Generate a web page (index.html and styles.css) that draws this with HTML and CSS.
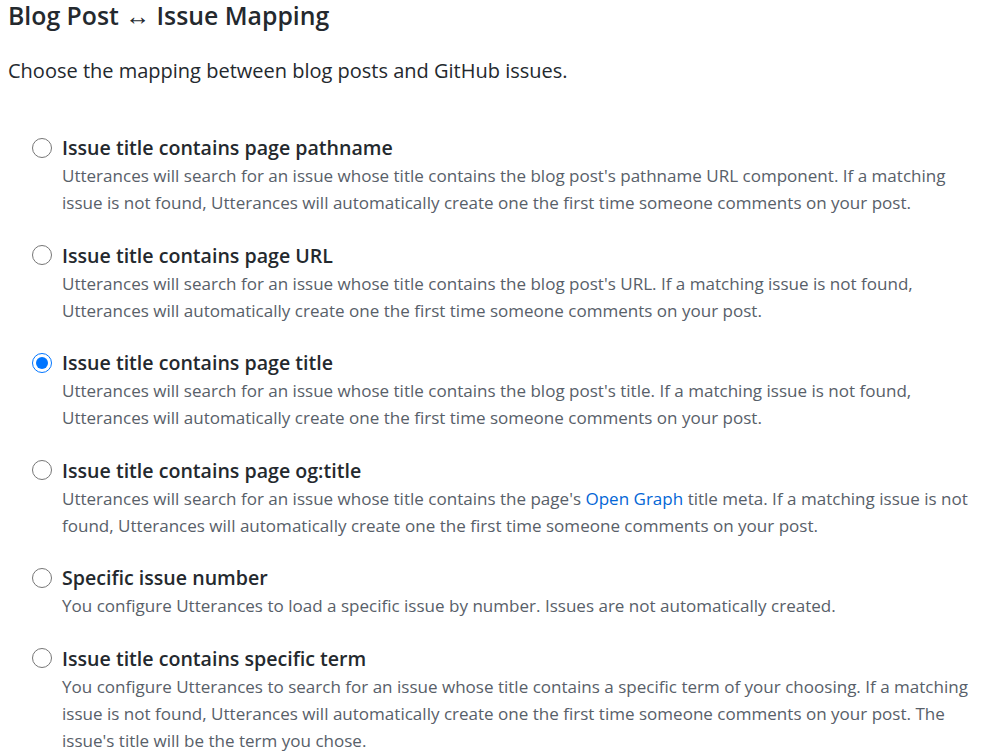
FILE: index.html
```html
<!DOCTYPE html>
<html lang="en">
<head>
<meta charset="utf-8">
<title>Blog Post ↔ Issue Mapping</title>
<link rel="stylesheet" href="styles.css">
</head>
<body>
<main class="page">
  <h2 class="heading">Blog Post ↔ Issue Mapping</h2>
  <p class="lead">Choose the mapping between blog posts and GitHub issues.</p>
  <div class="options">
    <div class="option">
      <label class="option-label"><input type="radio" name="mapping" value="pathname"><span class="option-title">Issue title contains page pathname</span></label>
      <p class="option-desc">Utterances will search for an issue whose title contains the blog post's pathname URL component. If a matching issue is not found, Utterances will automatically create one the first time someone comments on your post.</p>
    </div>
    <div class="option">
      <label class="option-label"><input type="radio" name="mapping" value="url"><span class="option-title">Issue title contains page URL</span></label>
      <p class="option-desc">Utterances will search for an issue whose title contains the blog post's URL. If a matching issue is not found, Utterances will automatically create one the first time someone comments on your post.</p>
    </div>
    <div class="option">
      <label class="option-label"><input type="radio" name="mapping" value="title" checked><span class="option-title">Issue title contains page title</span></label>
      <p class="option-desc">Utterances will search for an issue whose title contains the blog post's title. If a matching issue is not found, Utterances will automatically create one the first time someone comments on your post.</p>
    </div>
    <div class="option">
      <label class="option-label"><input type="radio" name="mapping" value="og:title"><span class="option-title">Issue title contains page og:title</span></label>
      <p class="option-desc">Utterances will search for an issue whose title contains the page's <a href="#">Open Graph</a> title meta. If a matching issue is not found, Utterances will automatically create one the first time someone comments on your post.</p>
    </div>
    <div class="option">
      <label class="option-label"><input type="radio" name="mapping" value="number"><span class="option-title">Specific issue number</span></label>
      <p class="option-desc">You configure Utterances to load a specific issue by number. Issues are not automatically created.</p>
    </div>
    <div class="option">
      <label class="option-label"><input type="radio" name="mapping" value="term"><span class="option-title">Issue title contains specific term</span></label>
      <p class="option-desc">You configure Utterances to search for an issue whose title contains a specific term of your choosing. If a matching issue is not found, Utterances will automatically create one the first time someone comments on your post. The issue's title will be the term you chose.</p>
    </div>
  </div>
</main>
</body>
</html>
```
FILE: styles.css
```css
html, body {
  margin: 0;
  padding: 0;
  background: #ffffff;
}

body {
  font-family: "Open Sans", "Noto Sans", "Liberation Sans", sans-serif;
  color: #24292e;
  font-size: 17.05px;
  line-height: 27px;
}

.page {
  padding: 0 14px 0 8px;
}

.heading {
  margin: 0;
  font-size: 24.8px;
  font-weight: 600;
  line-height: 30px;
  color: #24292e;
}

.lead {
  margin: 26px 0 0;
  font-size: 20px;
  line-height: 30px;
  color: #24292e;
}

.options {
  margin-top: 48px;
  padding-left: 24px;
}

.option {
  margin-bottom: 25.5px;
}

.option-label {
  display: flex;
  align-items: center;
  gap: 10px;
}

.option-label input {
  margin: 0;
  width: 20px;
  height: 20px;
}

.option-title {
  font-size: 19.6px;
  font-weight: 600;
  line-height: 27px;
  color: #24292e;
}

.option-desc {
  margin: 1px 0 0;
  padding-left: 30px;
  color: #586069;
  font-size: 17.05px;
  line-height: 27px;
}

.option-desc a {
  color: #0366d6;
  text-decoration: none;
}
```
